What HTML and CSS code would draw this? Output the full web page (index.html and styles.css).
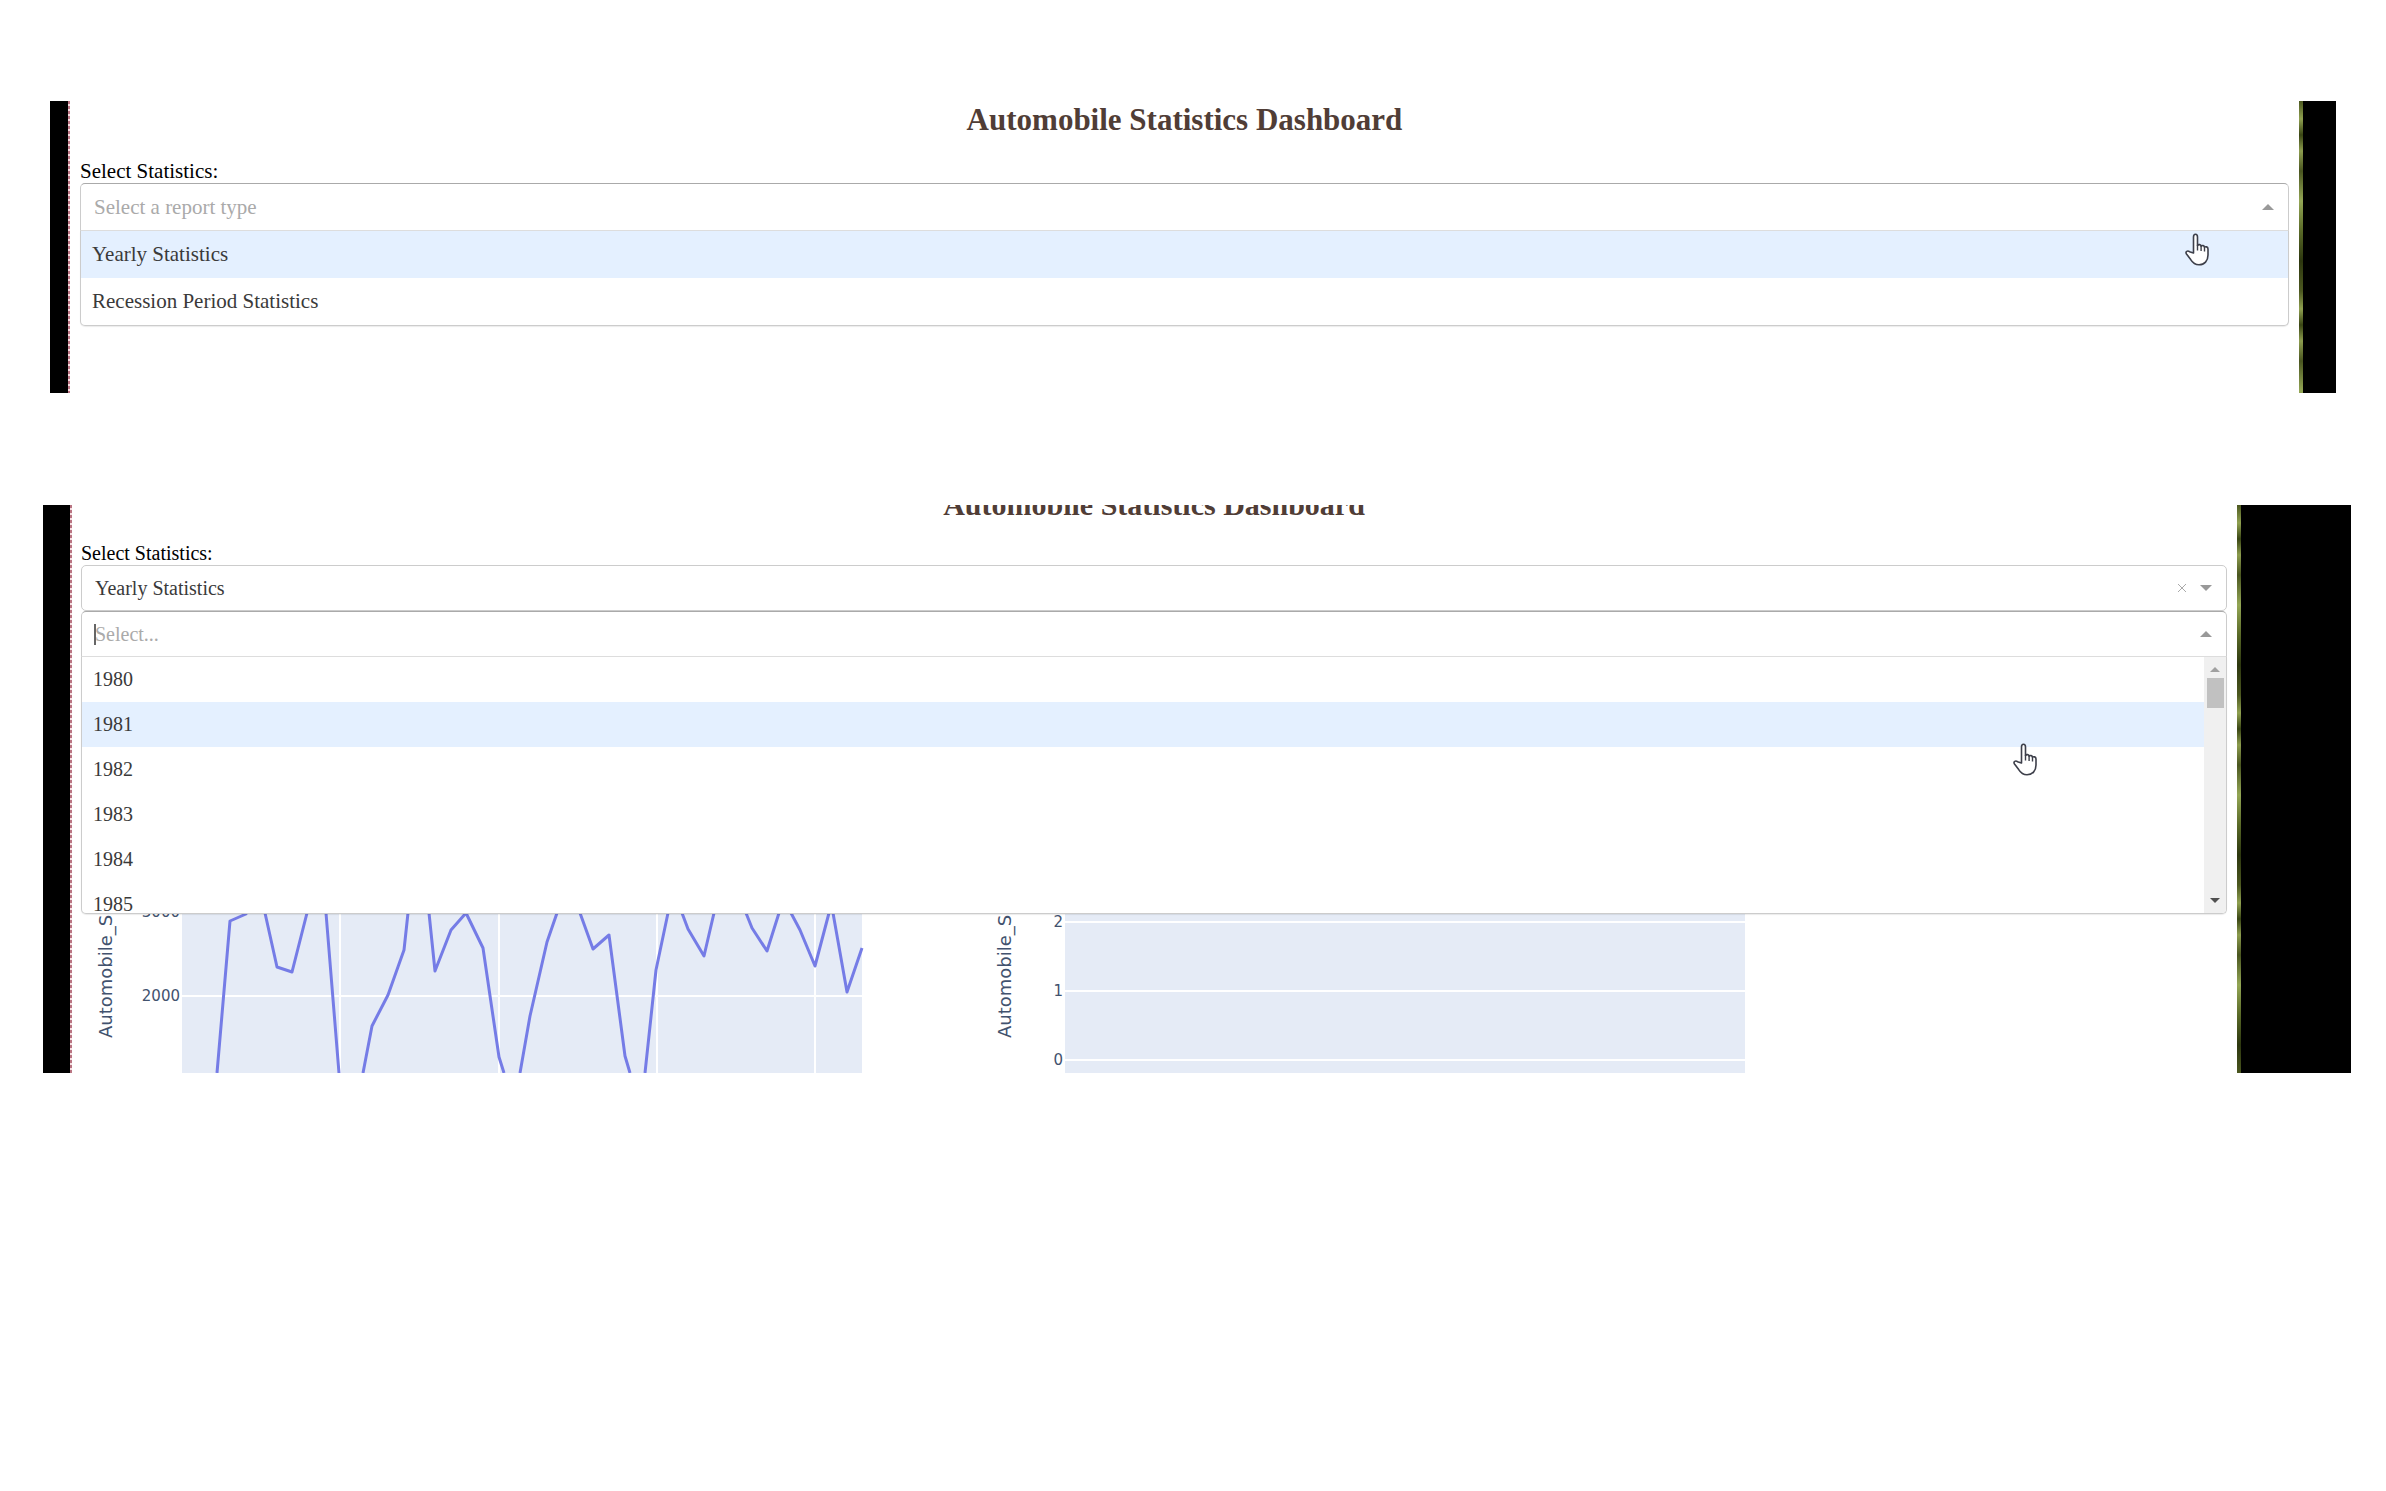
FILE: index.html
```html
<!DOCTYPE html>
<html lang="en">
<head>
<meta charset="utf-8">
<title>Automobile Statistics Dashboard</title>
<link rel="stylesheet" href="styles.css">
</head>
<body>
<svg class="sprite" aria-hidden="true">
  <symbol id="hand" viewBox="0 0 24 33">
    <path d="M8.500 20V4c0-3.600 4-3.600 4 0v8.500c1-1.500 3.400-1 3.600.6 1-1 3.200-.6 3.400 1 1-.8 3.500-.4 3.500 1.800V22c0 6-3.600 9.800-9 9.800-4 0-6.300-2-8.300-5.200L1.500 21c-1.500-2.500 1.200-3.800 3-2.300z" fill="#fff" stroke="#3d3f4a" stroke-width="1.600" stroke-linejoin="round"/>
    <path d="M12.500 12v5.500M16.100 13v5M19.500 14v4.500" fill="none" stroke="#3d3f4a" stroke-width="1.400"/>
  </symbol>
</svg>

<main class="page">
  <section class="panel">
    <div class="edge edge-left"></div>
    <div class="content">
      <h1 class="title">Automobile Statistics Dashboard</h1>
      <label class="label" for="report">Select Statistics:</label>
      <div class="dropdown">
        <div class="control open">
          <input class="value" id="report" type="text" role="combobox" aria-expanded="true" aria-controls="report-list" placeholder="Select a report type">
          <span class="arrow up"></span>
        </div>
        <div class="menu">
          <ul class="options" id="report-list" role="listbox">
            <li class="option focused" role="option">Yearly Statistics</li>
            <li class="option" role="option">Recession Period Statistics</li>
          </ul>
        </div>
        <svg class="cursor cursor-report" aria-hidden="true"><use href="#hand"/></svg>
      </div>
    </div>
    <div class="edge edge-right"></div>
  </section>

  <section class="panel panel-yearly">
    <div class="edge edge-left"></div>
    <div class="content">
      <h2 class="title">Automobile Statistics Dashboard</h2>
      <label class="label" for="statistics">Select Statistics:</label>
      <div class="control">
        <select class="value" id="statistics"><option>Yearly Statistics</option></select>
        <button class="clear" type="button" aria-label="Clear value"><svg viewBox="0 0 10 10"><path d="M1 1l8 8M9 1l-8 8"/></svg></button>
        <span class="arrow down"></span>
      </div>
      <div class="dropdown">
        <div class="control open">
          <span class="caret"></span>
          <input class="value" type="text" role="combobox" aria-label="Year" aria-expanded="true" aria-controls="year-list" placeholder="Select...">
          <span class="arrow up"></span>
        </div>
        <div class="menu menu-years">
          <ul class="options" id="year-list" role="listbox">
            <li class="option" role="option">1980</li>
            <li class="option focused" role="option">1981</li>
            <li class="option" role="option">1982</li>
            <li class="option" role="option">1983</li>
            <li class="option" role="option">1984</li>
            <li class="option" role="option">1985</li>
          </ul>
          <div class="scrollbar">
            <span class="step step-up"></span>
            <span class="thumb"></span>
            <span class="step step-down"></span>
          </div>
        </div>
        <svg class="cursor cursor-year" aria-hidden="true"><use href="#hand"/></svg>
      </div>
      <div class="charts">
        <svg class="chart" viewBox="0 0 883 416" role="img" aria-label="Yearly automobile sales">
          <rect class="plot" x="101" y="0" width="680" height="416"/>
          <path class="grid" d="M259 0V416M418 0V416M576 0V416M734 0V416M101 339H781"/>
          <path class="line" d="M136 416L149 264L165 257L173 220L184 256L196 310L211 315L226 256L236 220L245 256L258 416M282 416L291 369L307 338L323 293L327 256L340 120L348 256L354 314L370 273L385 256L402 291L418 400L423 416M439 416L449 359L466 285L476 256L490 220L499 256L512 292L528 278L544 399L549 416M564 416L575 313L587 256L595 220L601 256L607 272L623 299L633 256L650 200L665 256L671 271L686 294L698 256L704 236L710 256L719 273L734 309L748 256L750 236L752 256L766 335L781 291"/>
          <text class="tick" x="99" y="260">3000</text>
          <text class="tick" x="99" y="344">2000</text>
          <text class="axis" transform="translate(31 381) rotate(-90)">Automobile_S</text>
        </svg>
        <svg class="chart" viewBox="0 0 883 416" role="img" aria-label="Monthly automobile sales">
          <rect class="plot" x="101" y="0" width="680" height="416"/>
          <path class="grid" d="M101 265H781M101 334H781M101 403H781"/>
          <text class="tick" x="99" y="270">2</text>
          <text class="tick" x="99" y="339">1</text>
          <text class="tick" x="99" y="408">0</text>
          <text class="axis" transform="translate(47 381) rotate(-90)">Automobile_S</text>
        </svg>
      </div>
    </div>
    <div class="edge edge-right"></div>
  </section>
</main>
</body>
</html>
```

FILE: styles.css
```css
* { box-sizing: border-box; }

body {
  margin: 0;
  background: #fff;
  font-family: "Liberation Serif", "Times New Roman", serif;
}

.sprite { position: absolute; width: 0; height: 0; }

.page {
  display: flex;
  flex-direction: column;
  gap: 112px;
  padding: 101px 35px 0 43px;
}

.panel {
  display: flex;
  min-height: 292px;
  margin: 0 15px 0 7px;
  overflow: hidden;
  font-size: 21px;
}

.panel-yearly { margin: 0; font-size: 20px; }

/* Black side bars with a dotted red and a mottled green inner edge */
.edge { position: relative; flex: none; background: #000; }
.edge-left { width: 18px; }
.edge-right { width: 37px; }
.panel-yearly .edge-left { width: 27px; }
.panel-yearly .edge-right { width: 114px; }

.edge-left::after {
  content: "";
  position: absolute;
  top: 0;
  bottom: 0;
  left: 100%;
  width: 2px;
  background: repeating-linear-gradient(#b97482 0 3px, #f6dfe3 3px 5px);
}

.edge-right::before {
  content: "";
  position: absolute;
  top: 0;
  bottom: 0;
  left: 0;
  width: 4px;
  background: repeating-linear-gradient(#4c5820 0, #8fa050 18px, #3a4614 34px, #8c9c4e 50px, #4a5620 70px, #93a655 100px, #5a6a28 130px, #2d370f 160px, #4c5820 190px);
}

.content { flex: 1; min-width: 0; padding: 0 10px 0 12px; }
.panel-yearly .content { padding: 0 10px 0 11px; }

.title {
  margin: 0 0 20px;
  color: #503d36;
  font-size: 31px;
  line-height: 38px;
  text-align: center;
}

.panel-yearly .title { margin: -19px 0 17px; font-size: 30px; }

.label { display: block; line-height: 24px; color: #000; }

.dropdown { position: relative; }

.control {
  position: relative;
  display: flex;
  align-items: center;
  height: 48px;
  padding: 0 14px 0 13px;
  border: 1px solid #ccc;
  border-radius: 5px;
  background: #fff;
}

.panel-yearly .control { height: 46px; }

.control.open {
  border-color: #aaa #ccc #ddd;
  border-radius: 5px 5px 0 0;
}

.value {
  flex: 1;
  min-width: 0;
  height: 100%;
  padding: 0;
  border: 0;
  outline: 0;
  background: none;
  color: #3a3a3a;
  font: inherit;
  line-height: 28px;
  appearance: none;
}

.value::placeholder { color: #aaa; opacity: 1; }

.caret {
  position: absolute;
  left: 12px;
  width: 2px;
  height: 21px;
  background: #666;
}

.arrow { border: 6px solid transparent; }
.arrow.up { border-top: 0; border-bottom-color: #999; }
.arrow.down { border-bottom: 0; border-top-color: #999; }

.clear {
  width: 10px;
  height: 10px;
  margin-right: 13px;
  padding: 0;
  border: 0;
  background: none;
}

.clear svg { display: block; fill: none; stroke: #aaa; stroke-width: 1; }

.menu {
  position: absolute;
  top: 100%;
  left: 0;
  right: 0;
  display: flex;
  overflow: hidden;
  border: 1px solid #ccc;
  border-top: 0;
  border-radius: 0 0 5px 5px;
  background: #fff;
  box-shadow: 0 1px 1px rgba(0, 0, 0, 0.08);
}

.menu-years { height: 257px; }

.options { flex: 1; margin: 0; padding: 0; list-style: none; }
.option { padding: 0 11px; color: #3a3a3a; line-height: 47px; }
.menu-years .option { line-height: 45px; }
.focused { background: #e4f0ff; }

.scrollbar {
  display: flex;
  flex-direction: column;
  align-items: center;
  width: 22px;
  padding: 10px 0;
  background: #f0f0f0;
}

.step { border: 5px solid transparent; }
.step-up { border-top: 0; border-bottom-color: #a0a0a0; }
.step-down { margin-top: auto; border-bottom: 0; border-top-color: #505050; }
.thumb { width: 17px; height: 30px; margin-top: 6px; background: #c1c1c1; }

.cursor { position: absolute; width: 24px; height: 33px; }
.cursor-report { top: 50px; right: 80px; }
.cursor-year { top: 132px; right: 190px; }

.charts { display: flex; }
.chart { display: block; flex: none; width: 883px; height: 416px; }
.plot { fill: #e5ebf6; }
.grid { fill: none; stroke: #fff; stroke-width: 2; }
.line { fill: none; stroke: #757ce6; stroke-width: 3; stroke-linejoin: round; }
.tick, .axis { fill: #42526e; font-family: "DejaVu Sans", Verdana, sans-serif; }
.tick { font-size: 15px; text-anchor: end; }
.axis { font-size: 18px; }
```
